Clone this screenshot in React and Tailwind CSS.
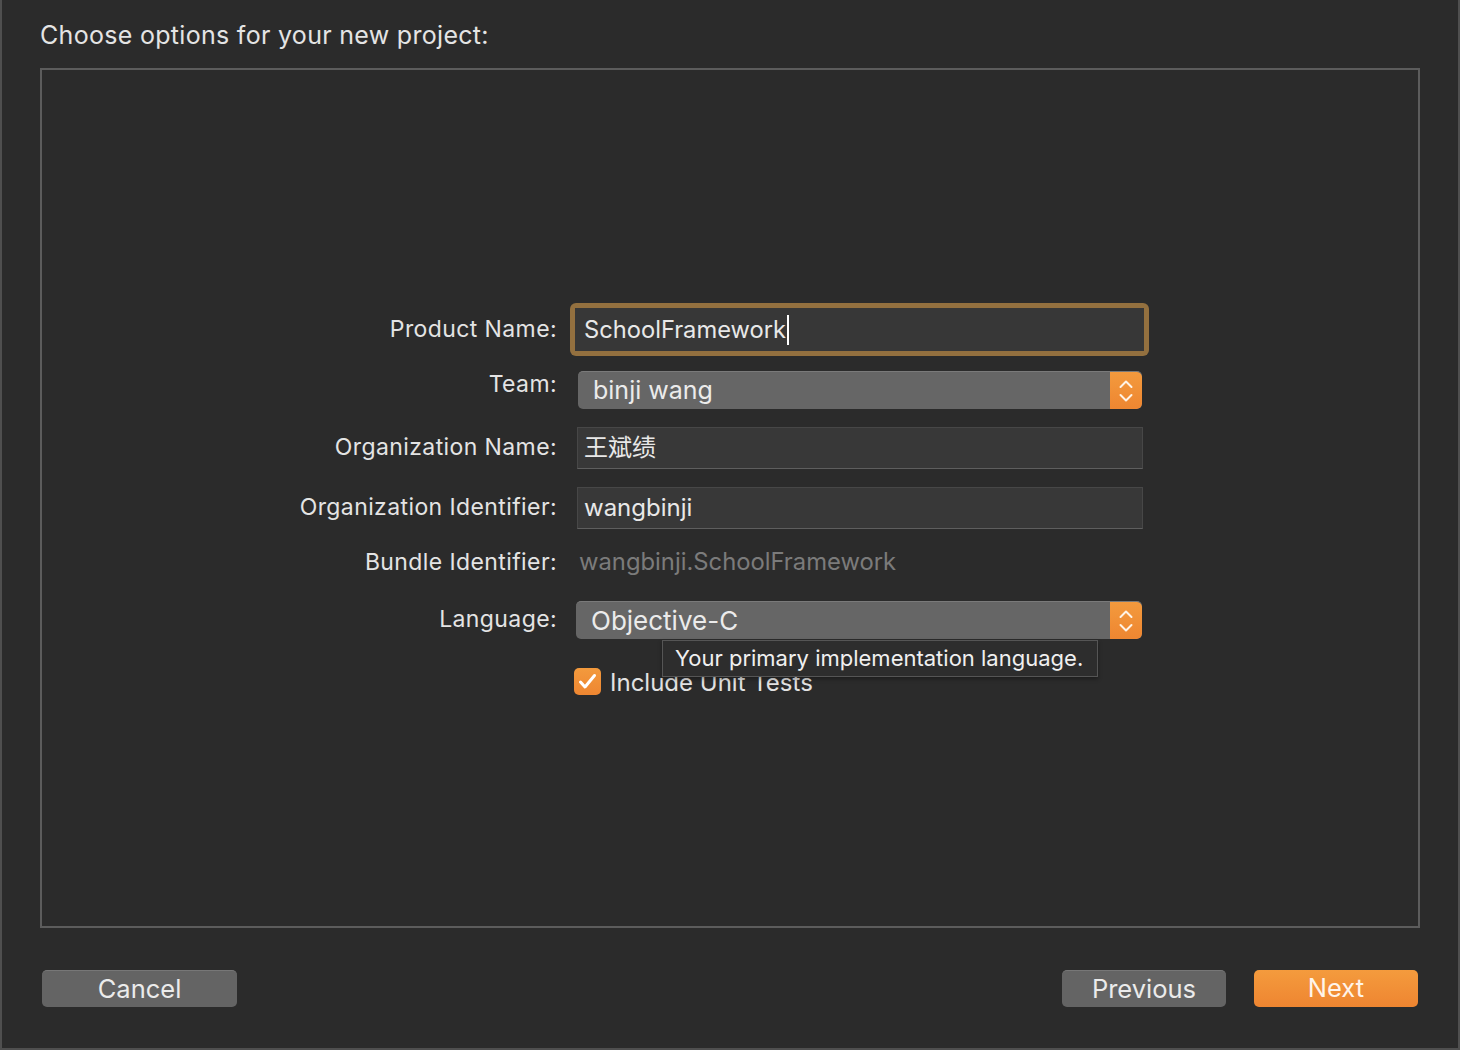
import React from "react";

const font = { fontFamily: "Inter, 'Noto Sans CJK SC', sans-serif" };

const Stepper = () => (
  <div className="flex h-full w-[32px] items-center justify-center rounded-r-[5px] bg-gradient-to-b from-[#f39a3d] to-[#ee8631]">
    <svg width="18" height="30" viewBox="0 0 18 30" fill="none" stroke="#fff3e6" strokeWidth="2" strokeLinecap="round" strokeLinejoin="round">
      <path d="M3.5 11 L9 5.5 L14.5 11" />
      <path d="M3.5 19 L9 24.5 L14.5 19" />
    </svg>
  </div>
);

const Label = ({ children, className = "" }) => (
  <div className={`w-[515px] shrink-0 text-right text-[23px] tracking-[0.4px] text-[#e4e4e4] ${className}`}>{children}</div>
);

export default function App() {
  return (
    <div
      className="flex h-[1050px] w-[1460px] flex-col border-x-2 border-b-2 border-[#4f4f4f] bg-[#2b2b2b] px-[38px]"
      style={font}
    >
      {/* Title */}
      <div className="flex h-[68px] items-center pt-[3px] text-[25px] tracking-[0.3px] text-[#e4e4e4]">
        Choose options for your new project:
      </div>

      {/* Options panel */}
      <div className="flex h-[860px] flex-col border-2 border-[#5c5c5c] pt-[233px]">
        {/* Product Name */}
        <div className="flex h-[53px] items-center">
          <Label>Product Name:</Label>
          <div className="ml-[13px] h-[53px] w-[579px] rounded-[6px] bg-[#93703f] p-[5px]">
            <div className="flex h-full items-center bg-[#373737] pl-[9px] text-[23.7px] text-[#e8e8e8]">
              SchoolFramework
              <span className="ml-[1px] h-[30px] w-[2px] bg-white" />
            </div>
          </div>
        </div>

        {/* Team */}
        <div className="mt-[15px] flex h-[38px] items-center">
          <Label className="pb-[12px]">Team:</Label>
          <div className="ml-[21px] flex h-[38px] w-[564px] overflow-hidden rounded-[5px] border-t border-[#7a7a7a] bg-[#666666]">
            <div className="flex flex-1 items-center pl-[15px] text-[25px] text-[#ebebeb]">binji wang</div>
            <Stepper />
          </div>
        </div>

        {/* Organization Name */}
        <div className="mt-[18px] flex h-[42px] items-center">
          <Label className="pb-[2px]">Organization Name:</Label>
          <div className="ml-[20px] flex h-[42px] w-[566px] items-center border border-[#474747] border-b-[#5e5e5e] bg-[#383838] pl-[6px] text-[24px] text-[#e8e8e8]">
            王斌绩
          </div>
        </div>

        {/* Organization Identifier */}
        <div className="mt-[18px] flex h-[42px] items-center">
          <Label className="pb-[2px]">Organization Identifier:</Label>
          <div className="ml-[20px] flex h-[42px] w-[566px] items-center border border-[#474747] border-b-[#5e5e5e] bg-[#383838] pl-[6px] text-[24px] text-[#e8e8e8]">
            wangbinji
          </div>
        </div>

        {/* Bundle Identifier */}
        <div className="mt-[20px] flex h-[26px] items-center">
          <Label>Bundle Identifier:</Label>
          <div className="ml-[22px] text-[23.8px] text-[#7b7b7b]">wangbinji.SchoolFramework</div>
        </div>

        {/* Language */}
        <div className="relative mt-[26px] flex h-[38px] items-center">
          <Label className="pb-[2px]">Language:</Label>
          <div className="ml-[19px] flex h-[38px] w-[566px] overflow-hidden rounded-[5px] border-t border-[#7a7a7a] bg-[#666666]">
            <div className="flex flex-1 items-center pl-[15px] text-[26px] text-[#ebebeb]">Objective-C</div>
            <Stepper />
          </div>
          {/* Tooltip */}
          <div className="absolute left-[620px] top-[39px] z-10 flex h-[37px] w-[436px] items-center border border-[#555555] bg-[#2d2d2d] pl-[12px] text-[22px] text-[#f0f0f0] shadow-[0_2px_4px_rgba(0,0,0,0.35)]">
            Your primary implementation language.
          </div>
        </div>

        {/* Include Unit Tests */}
        <div className="mt-[29px] flex h-[27px] items-center">
          <div className="w-[515px] shrink-0" />
          <div className="ml-[17px] flex items-center gap-[9px]">
            <div className="flex h-[27px] w-[27px] items-center justify-center rounded-[5px] bg-gradient-to-b from-[#f39a3d] to-[#ee8631]">
              <svg width="21" height="19" viewBox="0 0 21 19" fill="none" stroke="#ffffff" strokeWidth="3" strokeLinecap="round" strokeLinejoin="round">
                <path d="M3.5 10 L8 15 L17.5 3.5" />
              </svg>
            </div>
            <span className="pt-[3px] text-[24px] text-[#e2e2e2]">Include Unit Tests</span>
          </div>
        </div>
      </div>

      {/* Buttons */}
      <div className="mt-[42px] flex items-center px-[2px]">
        <button className="flex h-[37px] w-[195px] items-center justify-center rounded-[5px] border-t border-[#777777] bg-[#646464] text-[25.5px] text-[#ebebeb]">
          Cancel
        </button>
        <div className="flex-1" />
        <button className="flex h-[37px] w-[164px] items-center justify-center rounded-[5px] border-t border-[#777777] bg-[#646464] text-[25.5px] text-[#ebebeb]">
          Previous
        </button>
        <button className="ml-[28px] flex h-[37px] w-[164px] items-center justify-center rounded-[5px] bg-gradient-to-b from-[#f49b3d] to-[#ee8531] text-[25.5px] text-[#fff4ea]">
          Next
        </button>
      </div>
    </div>
  );
}
